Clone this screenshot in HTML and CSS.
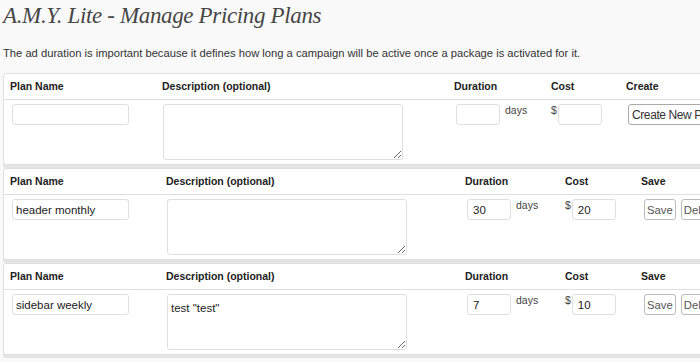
FILE: index.html
```html
<!DOCTYPE html>
<html>
<head>
<meta charset="utf-8">
<title>A.M.Y. Lite - Manage Pricing Plans</title>
<link rel="stylesheet" href="styles.css">
</head>
<body>
<div class="wrap">
  <h2 class="title">A.M.Y. Lite - Manage Pricing Plans</h2>
  <p class="intro">The ad duration is important because it defines how long a campaign will be active once a package is activated for it.</p>

  <table class="plans plans-new">
    <colgroup><col class="c-name"><col class="c-desc"><col class="c-dur"><col class="c-cost"><col class="c-act"></colgroup>
    <thead><tr><th>Plan Name</th><th>Description (optional)</th><th>Duration</th><th>Cost</th><th>Create</th></tr></thead>
    <tbody><tr>
      <td><input class="field name" type="text" value=""></td>
      <td><textarea class="field desc"></textarea></td>
      <td><div class="inline"><input class="field num" type="text" value=""><span class="unit">days</span></div></td>
      <td><div class="inline"><span class="cur">$</span><input class="field num" type="text" value=""></div></td>
      <td><div class="inline"><button class="btn btn-create">Create New Plan</button></div></td>
    </tr></tbody>
  </table>

  <table class="plans">
    <colgroup><col class="c-name"><col class="c-desc"><col class="c-dur"><col class="c-cost"><col class="c-act"></colgroup>
    <thead><tr><th>Plan Name</th><th>Description (optional)</th><th>Duration</th><th>Cost</th><th>Save</th></tr></thead>
    <tbody><tr>
      <td><input class="field name" type="text" value="header monthly"></td>
      <td><textarea class="field desc"></textarea></td>
      <td><div class="inline"><input class="field num" type="text" value="30"><span class="unit">days</span></div></td>
      <td><div class="inline"><span class="cur">$</span><input class="field num" type="text" value="20"></div></td>
      <td><div class="inline"><button class="btn">Save</button><button class="btn">Delete</button></div></td>
    </tr></tbody>
  </table>

  <table class="plans">
    <colgroup><col class="c-name"><col class="c-desc"><col class="c-dur"><col class="c-cost"><col class="c-act"></colgroup>
    <thead><tr><th>Plan Name</th><th>Description (optional)</th><th>Duration</th><th>Cost</th><th>Save</th></tr></thead>
    <tbody><tr>
      <td><input class="field name" type="text" value="sidebar weekly"></td>
      <td><textarea class="field desc">test "test"</textarea></td>
      <td><div class="inline"><input class="field num" type="text" value="7"><span class="unit">days</span></div></td>
      <td><div class="inline"><span class="cur">$</span><input class="field num" type="text" value="10"></div></td>
      <td><div class="inline"><button class="btn">Save</button><button class="btn">Delete</button></div></td>
    </tr></tbody>
  </table>
</div>
</body>
</html>
```

FILE: styles.css
```css
html {
  overflow: hidden;
  background: #f9f9f9;
}
body {
  margin: 0;
  background: #f9f9f9;
  font-family: "Liberation Sans", Arial, sans-serif;
  color: #333;
}
.wrap {
  padding: 0 0 0 3px;
}
.title {
  margin: 0;
  padding: 1px 0 0 0;
  font-family: "Liberation Serif", serif;
  font-style: italic;
  font-weight: normal;
  font-size: 23px;
  line-height: 29px;
  letter-spacing: -0.35px;
  color: #464646;
}
.intro {
  margin: 14px 0 11px;
  font-size: 11.2px;
  line-height: 18px;
  color: #333;
}
.plans {
  width: 790px;
  table-layout: fixed;
  border-collapse: separate;
  border-spacing: 0;
  border: 1px solid #dfdfdf;
  border-radius: 3px;
  background: #fff;
  box-shadow: 0 3px 0 #e4e4e4;
  margin-bottom: 3px;
}
.plans .c-name { width: 156px; }
.plans .c-desc { width: 299px; }
.plans .c-dur { width: 100px; }
.plans .c-cost { width: 76px; }
.plans-new .c-name { width: 152px; }
.plans-new .c-desc { width: 292px; }
.plans-new .c-dur { width: 97px; }
.plans-new .c-cost { width: 75px; }

.plans th {
  text-align: left;
  font-weight: bold;
  font-size: 10.5px;
  line-height: 13px;
  padding: 6px 6px;
  color: #222;
  border-bottom: 1px solid #dfdfdf;
  white-space: nowrap;
}
.plans td {
  padding: 4px 6px;
  vertical-align: top;
}
.field {
  box-sizing: border-box;
  margin: 0;
  border: 1px solid #dfdfdf;
  border-radius: 3px;
  background: #fff;
  font-family: "Liberation Sans", Arial, sans-serif;
  font-size: 11.5px;
  color: #222;
  outline: none;
}
.field.name {
  display: block;
  width: 117px;
  height: 21px;
  margin-left: 2px;
  padding: 0 3px;
}
.field.desc {
  display: block;
  width: 240px;
  height: 56px;
  margin-left: 1px;
  padding: 6px 3px;
  line-height: 14px;
  resize: both;
}
.inline {
  display: flex;
  align-items: flex-start;
  white-space: nowrap;
}
.field.num {
  width: 44px;
  height: 21px;
  padding: 0 5px;
  flex: none;
}
.plans td:nth-child(3) .inline {
  margin-left: 2px;
}
.unit {
  margin-left: 5px;
  font-size: 10.5px;
  line-height: 13px;
  color: #444;
}
.cur {
  font-size: 10.5px;
  line-height: 13px;
  color: #444;
  margin-right: 1px;
}
.btn {
  flex: none;
  box-sizing: border-box;
  height: 21px;
  margin: 0 5px 0 3px;
  padding: 0 2px;
  border: 1px solid #bbb;
  border-radius: 3px;
  background: #fff;
  font-family: "Liberation Sans", Arial, sans-serif;
  font-size: 11.3px;
  color: #555;
}
.btn + .btn {
  margin-left: 0;
}
.btn-create {
  margin-left: 2px;
  font-size: 12px;
  letter-spacing: -0.4px;
  padding: 0 3px;
  border-color: #aaa;
  color: #333;
}
```
